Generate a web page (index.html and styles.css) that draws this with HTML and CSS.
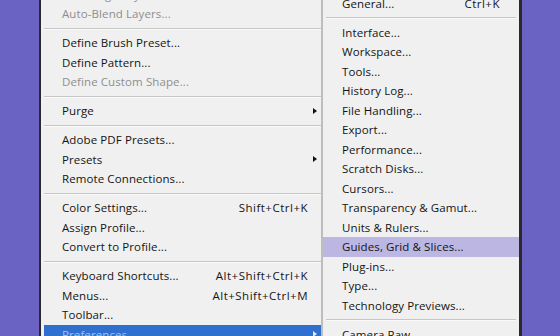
FILE: index.html
```html
<!DOCTYPE html>
<html>
<head>
<meta charset="utf-8">
<link rel="stylesheet" href="styles.css">
</head>
<body>
<div class="stage">
  <div class="menu main">
    <div class="item disabled"><span class="label">Auto-Align Layers...</span></div>
    <div class="item disabled"><span class="label">Auto-Blend Layers...</span></div>
    <div class="sep"></div>
    <div class="item"><span class="label">Define Brush Preset...</span></div>
    <div class="item"><span class="label">Define Pattern...</span></div>
    <div class="item disabled"><span class="label">Define Custom Shape...</span></div>
    <div class="sep"></div>
    <div class="item"><span class="label">Purge</span><span class="arrow"></span></div>
    <div class="sep"></div>
    <div class="item"><span class="label">Adobe PDF Presets...</span></div>
    <div class="item"><span class="label">Presets</span><span class="arrow"></span></div>
    <div class="item"><span class="label">Remote Connections...</span></div>
    <div class="sep"></div>
    <div class="item"><span class="label">Color Settings...</span><span class="key">Shift+Ctrl+K</span></div>
    <div class="item"><span class="label">Assign Profile...</span></div>
    <div class="item"><span class="label">Convert to Profile...</span></div>
    <div class="sep"></div>
    <div class="item"><span class="label">Keyboard Shortcuts...</span><span class="key">Alt+Shift+Ctrl+K</span></div>
    <div class="item"><span class="label">Menus...</span><span class="key">Alt+Shift+Ctrl+M</span></div>
    <div class="item"><span class="label">Toolbar...</span></div>
    <div class="item active"><span class="label">Preferences</span><span class="arrow"></span></div>
  </div>
  <div class="menu sub">
    <div class="item"><span class="label">General...</span><span class="key">Ctrl+K</span></div>
    <div class="sep"></div>
    <div class="item"><span class="label">Interface...</span></div>
    <div class="item"><span class="label">Workspace...</span></div>
    <div class="item"><span class="label">Tools...</span></div>
    <div class="item"><span class="label">History Log...</span></div>
    <div class="item"><span class="label">File Handling...</span></div>
    <div class="item"><span class="label">Export...</span></div>
    <div class="item"><span class="label">Performance...</span></div>
    <div class="item"><span class="label">Scratch Disks...</span></div>
    <div class="item"><span class="label">Cursors...</span></div>
    <div class="item"><span class="label">Transparency &amp; Gamut...</span></div>
    <div class="item"><span class="label">Units &amp; Rulers...</span></div>
    <div class="item hover"><span class="label">Guides, Grid &amp; Slices...</span></div>
    <div class="item"><span class="label">Plug-ins...</span></div>
    <div class="item"><span class="label">Type...</span></div>
    <div class="item"><span class="label">Technology Previews...</span></div>
    <div class="sep"></div>
    <div class="item"><span class="label">Camera Raw...</span></div>
  </div>
</div>
</body>
</html>
```
FILE: styles.css
```css
html, body {
  margin: 0;
  padding: 0;
  width: 560px;
  height: 336px;
  overflow: hidden;
  background: #6b63c3;
}
.stage {
  display: flex;
  align-items: flex-start;
  margin-left: 39px;
}
.menu {
  background: #f0f0f0;
  font-family: "Open Sans", "Noto Sans", sans-serif;
  font-size: 11.5px;
  color: #141414;
}
.main {
  width: 277px;
  border-left: 2px solid #2a2a2a;
  padding-left: 3px;
  margin-top: -15.5px;
}
.sub {
  width: 196px;
  border-left: 2px solid #bdbdbd;
  border-right: 3px solid #2a2a2a;
  margin-top: -6.5px;
}
.item {
  display: flex;
  align-items: center;
  height: 19.5px;
  line-height: 19.5px;
  white-space: nowrap;
  position: relative;
}
.main .item { padding-left: 18px; padding-right: 3px; }
.sub .item { padding-left: 19px; padding-right: 19px; }
.label { flex: 1; letter-spacing: 0.1px; }
.key { text-align: right; letter-spacing: 0.5px; }
.main .key { padding-right: 10px; }
.sub .key { padding-right: 0; }
.disabled { color: #8e8e8e; }
.sep {
  height: 9.5px;
  display: flex;
  align-items: center;
}
.sep::before {
  content: "";
  display: block;
  flex: 1;
  height: 1px;
  background: #c6c6c6;
  box-shadow: 0 1px 0 #fafafa;
}
.sub .sep::before { margin: 0 3px; }
.arrow {
  width: 0;
  height: 0;
  border-top: 3.5px solid transparent;
  border-bottom: 3.5px solid transparent;
  border-left: 4px solid #111;
  margin-right: 1px;
}
.active {
  background: #2e6fd0;
  color: #a7c0ea;
}
.active .arrow { border-left-color: #dfe9fa; }
.hover { background: #bcb7e2; }
```
